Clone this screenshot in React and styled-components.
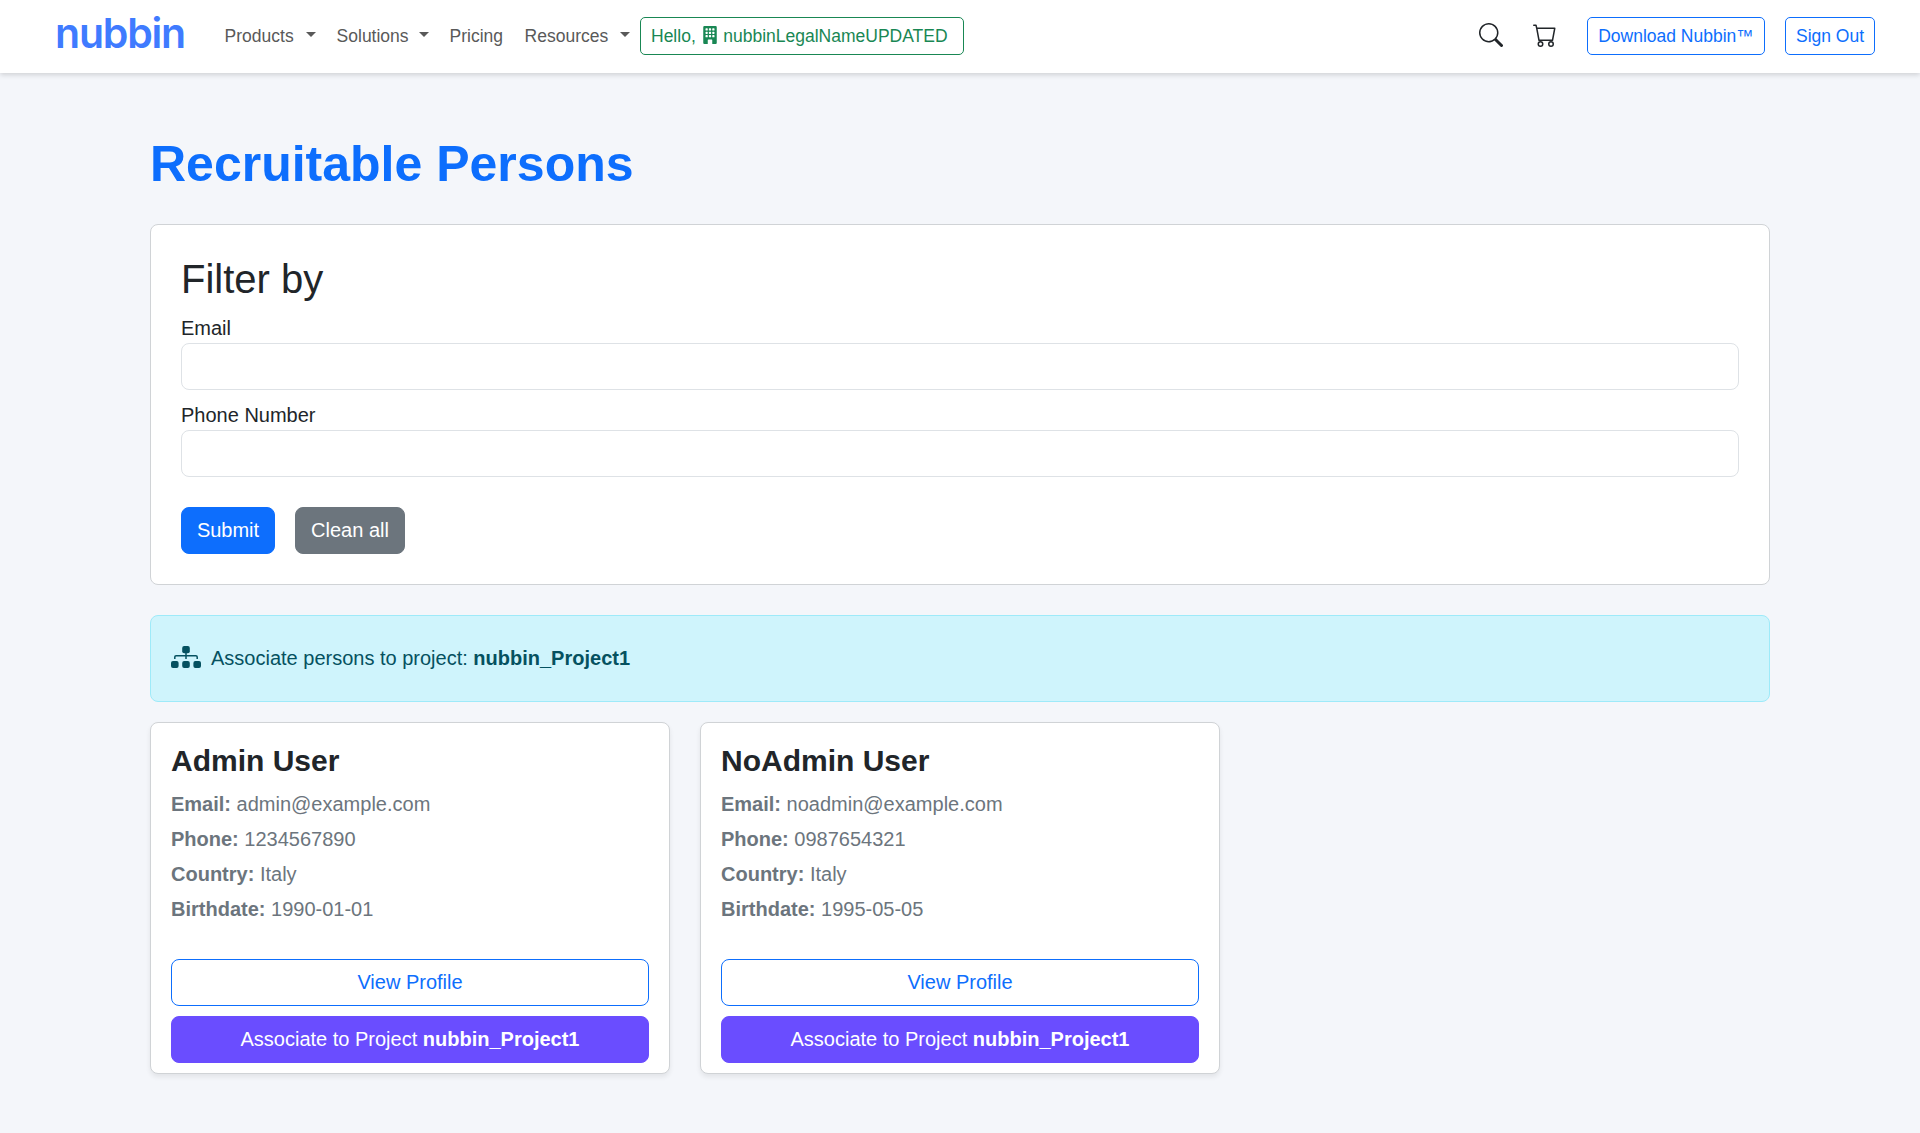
import React from "react";
import styled, { createGlobalStyle } from "styled-components";
import { BsSearch, BsCart, BsBuildingFill } from "react-icons/bs";

const GlobalStyle = createGlobalStyle`
  *, *::before, *::after { box-sizing: border-box; }
  body {
    margin: 0;
    background: #f4f6fa;
    color: #212529;
    font-family: "Liberation Sans", Arial, sans-serif;
    font-size: 20px;
    line-height: 30px;
  }
  h1, h2, h3, p { margin: 0; }
`;

const Page = styled.div`
  min-height: 1133px;
  background: #f4f6fa;
`;

const Navbar = styled.nav`
  display: flex;
  align-items: center;
  height: 73px;
  padding: 0 45px 2px 55px;
  background: #fff;
  box-shadow: 0 2px 5px rgba(0, 0, 0, 0.15);
  font-size: 17.5px;
  line-height: 26px;
`;

const Brand = styled.a`
  width: 159px;
  height: 71px;
  padding-top: 4px;
  color: #3f7bff;
  font-family: Inter, sans-serif;
  font-size: 41px;
  font-weight: 600;
  line-height: 58px;
  letter-spacing: -1.2px;
`;

const NavLink = styled.a`
  display: flex;
  align-items: center;
  width: ${(p) => p.$width}px;
  padding: 0 10px 0 10.6px;
  justify-content: space-between;
  color: #595959;
`;

const Caret = styled.span`
  margin-top: -2px;
  border: 5px solid transparent;
  border-top-color: currentColor;
  border-bottom: 0;
`;

const NavButton = styled.a`
  display: flex;
  align-items: center;
  justify-content: ${(p) => (p.$start ? "flex-start" : "center")};
  width: ${(p) => p.$width}px;
  height: 38px;
  padding: 0 10px;
  border: 1px solid currentColor;
  border-radius: 5px;
  color: ${(p) => p.$color};
  white-space: nowrap;
`;

const Building = styled(BsBuildingFill)`
  width: 18px;
  height: 18px;
  margin: -2px 4.5px 0 5px;
`;

const NavActions = styled.div`
  display: flex;
  align-items: center;
  margin-left: auto;
  color: #212529;
`;

const SearchIcon = styled(BsSearch)`
  width: 24px;
  height: 24px;
  margin-right: 30px;
  margin-top: -2px;
`;

const CartIcon = styled(BsCart)`
  width: 24px;
  height: 24px;
  margin-right: 30px;
  margin-top: -1px;
`;

const ButtonPair = styled.div`
  display: flex;
  gap: 20px;
`;

const Main = styled.main`
  width: 1620px;
  margin: 0 auto;
  padding-top: 61px;
`;

const Title = styled.h1`
  margin-bottom: 30px;
  color: #0d6efd;
  font-size: 50px;
  font-weight: 700;
  line-height: 60px;
`;

const FilterCard = styled.section`
  height: 361px;
  padding: 30px;
  border: 1px solid #d0d3d6;
  border-radius: 8px;
  background: #fff;
`;

const FilterTitle = styled.h2`
  margin-bottom: 10px;
  font-size: 40px;
  font-weight: 400;
  line-height: 48px;
`;

const Field = styled.label`
  display: block;
  margin-bottom: 10px;
`;

const Input = styled.input`
  display: block;
  width: 100%;
  height: 47px;
  padding: 8px 15px;
  border: 1px solid #dee2e6;
  border-radius: 8px;
  background: #fff;
  font: inherit;
`;

const FormActions = styled.div`
  display: flex;
  gap: 20px;
  margin-top: 30px;
`;

const Button = styled.button`
  width: ${(p) => (p.$width ? p.$width + "px" : "100%")};
  height: 47px;
  padding: 0 0 2px;
  border: 1px solid ${(p) => p.$border || p.$bg};
  border-radius: 8px;
  background: ${(p) => p.$bg};
  color: ${(p) => p.$color || "#fff"};
  font: inherit;
  white-space: nowrap;
`;

const Alert = styled.div`
  display: flex;
  align-items: center;
  height: 87px;
  margin: 30px 0 20px;
  padding: 0 20px 2px;
  border: 1px solid #9eeaf9;
  border-radius: 8px;
  background: #cff4fc;
  color: #055160;
`;

const ProjectIconSvg = styled.svg`
  width: 30px;
  height: 22px;
  margin-right: 10px;
  margin-top: -1px;
  fill: currentColor;
`;

const Cards = styled.div`
  display: grid;
  grid-template-columns: repeat(3, 520px);
  gap: 30px;
`;

const Card = styled.article`
  height: 352px;
  padding: 20px;
  border: 1px solid #d0d3d6;
  border-radius: 8px;
  background: #fff;
  box-shadow: 0 3px 5px rgba(0, 0, 0, 0.075);
`;

const CardTitle = styled.h3`
  margin-bottom: 8px;
  font-size: 30px;
  font-weight: 700;
  line-height: 36px;
`;

const Detail = styled.p`
  height: 35px;
  color: #6c757d;
  line-height: 35px;
`;

const CardActions = styled.div`
  display: grid;
  gap: 10px;
  margin-top: 32px;
`;

const PEOPLE = [
  { name: "Admin User", email: "admin@example.com", phone: "1234567890", country: "Italy", birthdate: "1990-01-01" },
  { name: "NoAdmin User", email: "noadmin@example.com", phone: "0987654321", country: "Italy", birthdate: "1995-05-05" },
];

const PROJECT = "nubbin_Project1";

function ProjectIcon() {
  return (
    <ProjectIconSvg viewBox="0 0 30 22" aria-hidden="true">
      <rect x="11.2" y="0" width="7.6" height="7.2" rx="2" />
      <rect x="0" y="14.9" width="7.6" height="7.1" rx="2" />
      <rect x="11.2" y="14.9" width="7.6" height="7.1" rx="2" />
      <rect x="22.4" y="14.9" width="7.6" height="7.1" rx="2" />
      <path
        d="M3.8 12.9V11q0-1.3 1.3-1.3h19.8q1.3 0 1.3 1.3v1.9M15 7v6"
        fill="none"
        stroke="currentColor"
        strokeWidth="1.5"
      />
    </ProjectIconSvg>
  );
}

function PersonCard({ person }) {
  return (
    <Card>
      <CardTitle>{person.name}</CardTitle>
      <Detail><b>Email:</b> {person.email}</Detail>
      <Detail><b>Phone:</b> {person.phone}</Detail>
      <Detail><b>Country:</b> {person.country}</Detail>
      <Detail><b>Birthdate:</b> {person.birthdate}</Detail>
      <CardActions>
        <Button $bg="#fff" $border="#0d6efd" $color="#0d6efd">View Profile</Button>
        <Button $bg="#6a4dff">Associate to Project <b>{PROJECT}</b></Button>
      </CardActions>
    </Card>
  );
}

export default function App() {
  return (
    <Page>
      <GlobalStyle />
      <Navbar>
        <Brand>nubbin</Brand>
        <NavLink $width={112}>Products<Caret /></NavLink>
        <NavLink $width={113}>Solutions<Caret /></NavLink>
        <NavLink $width={75}>Pricing</NavLink>
        <NavLink $width={126}>Resources<Caret /></NavLink>
        <NavButton $start $width={324} $color="#198754">
          Hello,<Building />nubbinLegalNameUPDATED
        </NavButton>
        <NavActions>
          <SearchIcon />
          <CartIcon />
          <ButtonPair>
            <NavButton $width={178} $color="#0d6efd">Download Nubbin™</NavButton>
            <NavButton $width={90} $color="#0d6efd">Sign Out</NavButton>
          </ButtonPair>
        </NavActions>
      </Navbar>
      <Main>
        <Title>Recruitable Persons</Title>
        <FilterCard>
          <FilterTitle>Filter by</FilterTitle>
          <Field>Email<Input type="text" /></Field>
          <Field>Phone Number<Input type="text" /></Field>
          <FormActions>
            <Button $width={94} $bg="#0d6efd">Submit</Button>
            <Button $width={110} $bg="#6c757d">Clean all</Button>
          </FormActions>
        </FilterCard>
        <Alert>
          <ProjectIcon />
          <span>Associate persons to project: <b>{PROJECT}</b></span>
        </Alert>
        <Cards>
          {PEOPLE.map((person) => <PersonCard key={person.email} person={person} />)}
        </Cards>
      </Main>
    </Page>
  );
}
